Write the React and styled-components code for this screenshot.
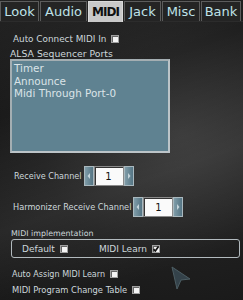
import React from 'react'
import styled, { createGlobalStyle } from 'styled-components'

const GlobalStyle = createGlobalStyle`
  html, body {
    margin: 0;
    padding: 0;
    background: #1b1b1b;
  }
  * { box-sizing: border-box; }
`

const Page = styled.div`
  position: relative;
  width: 243px;
  height: 300px;
  overflow: hidden;
  font-family: "DejaVu Sans", sans-serif;
  color: #cfd8dc;
  background:
    linear-gradient(160deg, rgba(255,255,255,0.05) 0%, rgba(255,255,255,0) 30%, rgba(255,255,255,0.07) 60%, rgba(255,255,255,0) 85%),
    radial-gradient(ellipse at 75% 45%, #333 0%, #1e1e1e 55%, #151515 100%);
`

const TabBar = styled.div`
  display: flex;
  height: 22px;
  padding-top: 1px;
  border-bottom: 1px solid #2c2c2c;
`

const Tab = styled.div`
  width: ${p => p.w}px;
  height: ${p => (p.active ? 21 : 20)}px;
  display: flex;
  align-items: center;
  justify-content: center;
  font-size: ${p => (p.active ? 12 : 13)}px;
  font-weight: ${p => (p.active ? 'bold' : 'normal')};
  letter-spacing: ${p => (p.active ? '-1px' : '0')};
  color: ${p => (p.active ? '#111' : '#bfe2e8')};
  background: ${p => (p.active ? '#c9c9c9' : '#242424')};
  border: 1px solid ${p => (p.active ? '#dadada' : '#5c5c5c')};
  border-bottom: none;
  margin-right: 1px;
`

const Content = styled.div`
  display: flex;
  flex-direction: column;
  padding: 0 4px 0 10px;
`

const Label = styled.span`
  font-size: ${p => p.size || 9}px;
  color: #cdd7db;
  white-space: nowrap;
  margin-left: ${p => p.ml || 0}px;
`

const Row = styled.div`
  display: flex;
  align-items: center;
  gap: ${p => p.gap ?? 5}px;
  margin-top: ${p => p.mt || 0}px;
  padding-left: ${p => p.pl || 0}px;
  height: ${p => p.h || 12}px;
`

const Box = styled.span`
  width: 8px;
  height: 8px;
  background: #f4f4f4;
  border: 1px solid #a0a0a0;
  box-shadow: inset 1px 1px 0 #666;
  display: inline-flex;
  align-items: center;
  justify-content: center;
  flex-shrink: 0;
`

const ListBox = styled.div`
  width: 160px;
  height: 94px;
  background: #5f8291;
  border: 2px solid #bcc4c8;
  border-top-color: #a4aeb2;
  border-left-color: #a4aeb2;
  padding: 1px 2px;
  display: flex;
  flex-direction: column;
`

const ListItem = styled.div`
  font-size: 10.4px;
  line-height: 12.6px;
  color: #dbe4e8;
`

const Spinner = styled.div`
  display: flex;
  height: 20px;
`

const Arrow = styled.div`
  width: 10px;
  height: 20px;
  background: linear-gradient(90deg, #7f9ca8, #557584);
  border: 1px solid #a9b8be;
  display: flex;
  align-items: center;
  justify-content: center;
`

const Value = styled.div`
  width: 30px;
  height: 20px;
  background: #fafafa;
  border: 1px solid #8a8a8a;
  box-shadow: inset 1px 1px 0 #333;
  display: flex;
  align-items: center;
  justify-content: center;
  font-size: 10px;
  color: #111;
`

const Group = styled.div`
  display: flex;
  align-items: center;
  width: 229px;
  height: 19px;
  margin-left: 1px;
  border: 1px solid #b2babe;
  border-radius: 3px;
  padding-left: 10px;
  gap: 5px;
`

const Cursor = styled.svg`
  position: absolute;
  left: 170px;
  top: 265px;
  filter: blur(0.6px);
`

function Check({ on }) {
  return (
    <Box>
      {on && (
        <svg width="6" height="6" viewBox="0 0 6 6">
          <path d="M0.5 3.2 L2.3 5 L5.6 0.4" stroke="#111" strokeWidth="1.7" fill="none" />
        </svg>
      )}
    </Box>
  )
}

function ArrowBtn({ dir }) {
  return (
    <Arrow>
      <svg width="4" height="6" viewBox="0 0 4 6">
        <path d={dir === 'left' ? 'M3 0 L0.5 3 L3 6 Z' : 'M1 0 L3.5 3 L1 6 Z'} fill="#c4d4da" />
      </svg>
    </Arrow>
  )
}

function SpinBox({ value }) {
  return (
    <Spinner>
      <ArrowBtn dir="left" />
      <Value>{value}</Value>
      <ArrowBtn dir="right" />
    </Spinner>
  )
}

const tabs = [
  { name: 'Look', w: 39 },
  { name: 'Audio', w: 47 },
  { name: 'MIDI', w: 35, active: true },
  { name: 'Jack', w: 37 },
  { name: 'Misc', w: 38 },
  { name: 'Bank', w: 40 },
]

export default function App() {
  return (
    <Page>
      <GlobalStyle />
      <TabBar>
        {tabs.map(t => (
          <Tab key={t.name} w={t.w} active={t.active}>{t.name}</Tab>
        ))}
      </TabBar>

      <Content>
        <Row mt={11} pl={3}>
          <Label size={8.85}>Auto Connect MIDI In</Label>
          <Check />
        </Row>
        <Row mt={3} h={11}>
          <Label size={9.3}>ALSA Sequencer Ports</Label>
        </Row>
        <ListBox>
          <ListItem>Timer</ListItem>
          <ListItem>Announce</ListItem>
          <ListItem>Midi Through Port-0</ListItem>
        </ListBox>

        <Row mt={13} pl={4} gap={2} h={20}>
          <Label size={8.1}>Receive Channel</Label>
          <SpinBox value="1" />
        </Row>
        <Row mt={11} pl={3} gap={2} h={20}>
          <Label size={8.2}>Harmonizer Receive Channel</Label>
          <SpinBox value="1" />
        </Row>

        <Row mt={10} pl={1}>
          <Label size={7.9}>MIDI implementation</Label>
        </Row>
        <Group>
          <Label>Default</Label>
          <Check />
          <Label ml={26}>MIDI Learn</Label>
          <Check on />
        </Group>

        <Row mt={10} pl={2}>
          <Label size={8.05}>Auto Assign MIDI Learn</Label>
          <Check />
        </Row>
        <Row mt={4} pl={2}>
          <Label size={8.35}>MIDI Program Change Table</Label>
          <Check />
        </Row>
      </Content>

      <Cursor width="22" height="26" viewBox="0 0 22 26">
        <path d="M2 2 L20 14 L11 15 L7 24 Z" fill="#34424a" stroke="#4d5e64" strokeWidth="1" />
      </Cursor>
    </Page>
  )
}
